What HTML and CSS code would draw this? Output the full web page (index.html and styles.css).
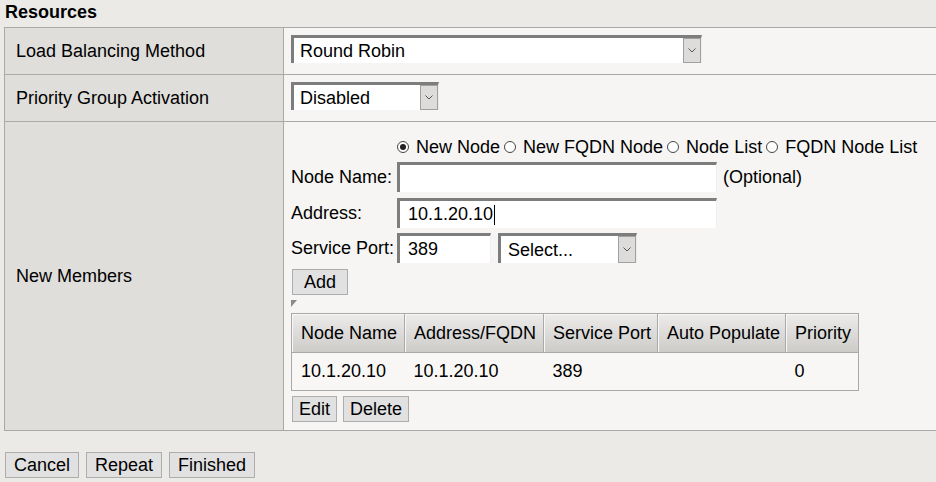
FILE: index.html
```html
<!DOCTYPE html>
<html lang="en">
  <head>
    <meta charset="UTF-8" />
    <title>Pool Resources</title>
    <link rel="stylesheet" href="styles.css">
  </head>
  <body>
    <div class="section-title">Resources</div>

    <table class="props">
      <colgroup>
        <col class="col-label">
        <col>
      </colgroup>
      <tr>
        <th>Load Balancing Method</th>
        <td>
          <div class="select select-lb">
            <span class="select-value">Round Robin</span>
            <span class="select-btn">
              <svg width="8" height="5" viewBox="0 0 8 5"><path d="M0.5 0.5 L4 4 L7.5 0.5" fill="none" stroke="#555" stroke-width="1"/></svg>
            </span>
          </div>
        </td>
      </tr>
      <tr>
        <th>Priority Group Activation</th>
        <td>
          <div class="select select-pga">
            <span class="select-value">Disabled</span>
            <span class="select-btn">
              <svg width="8" height="5" viewBox="0 0 8 5"><path d="M0.5 0.5 L4 4 L7.5 0.5" fill="none" stroke="#555" stroke-width="1"/></svg>
            </span>
          </div>
        </td>
      </tr>
      <tr>
        <th>New Members</th>
        <td class="members-cell">
          <div class="radio-row">
            <span class="radio checked"></span><span class="radio-text">New Node</span>
            <span class="radio"></span><span class="radio-text">New FQDN Node</span>
            <span class="radio"></span><span class="radio-text">Node List</span>
            <span class="radio"></span><span class="radio-text">FQDN Node List</span>
          </div>

          <div class="field-row">
            <span class="field-label">Node Name:</span>
            <div class="text-input input-wide"></div>
            <span class="hint">(Optional)</span>
          </div>
          <div class="field-row gap6">
            <span class="field-label">Address:</span>
            <div class="text-input input-wide">10.1.20.10<span class="caret"></span></div>
          </div>
          <div class="field-row gap5">
            <span class="field-label">Service Port:</span>
            <div class="text-input input-port">389</div>
            <div class="select select-port">
              <span class="select-value">Select...</span>
              <span class="select-btn">
                <svg width="8" height="5" viewBox="0 0 8 5"><path d="M0.5 0.5 L4 4 L7.5 0.5" fill="none" stroke="#555" stroke-width="1"/></svg>
              </span>
            </div>
          </div>

          <div class="btn-row add-row">
            <button class="btn btn-add">Add</button>
          </div>

          <div class="marker"></div>

          <table class="members">
            <tr>
              <th class="c1">Node Name</th>
              <th class="c2">Address/FQDN</th>
              <th class="c3">Service Port</th>
              <th class="c4">Auto Populate</th>
              <th class="c5">Priority</th>
            </tr>
            <tr>
              <td>10.1.20.10</td>
              <td>10.1.20.10</td>
              <td>389</td>
              <td></td>
              <td>0</td>
            </tr>
          </table>

          <div class="btn-row edit-row">
            <button class="btn btn-small">Edit</button>
            <button class="btn btn-small">Delete</button>
          </div>
        </td>
      </tr>
    </table>

    <div class="actions">
      <button class="btn">Cancel</button>
      <button class="btn">Repeat</button>
      <button class="btn">Finished</button>
    </div>
  </body>
</html>
```

FILE: styles.css
```css
* {
    margin: 0;
    padding: 0;
    box-sizing: border-box;
}
html, body {
    overflow: hidden;
}
body {
    background-color: #ebeae7;
    font-family: "Liberation Sans", Arial, sans-serif;
    font-size: 18px;
    color: #000;
}

.section-title {
    font-weight: bold;
    height: 27px;
    padding: 1px 5px 0;
    line-height: 22px;
}

/* main property table */
.props {
    border-collapse: collapse;
    table-layout: fixed;
    width: 932px;
    margin-left: 4px;
}
.col-label {
    width: 279px;
}
.props > tbody > tr > th,
.props > tbody > tr > td {
    border: 1px solid #a9a9a9;
}
.props > tbody > tr > td {
    border-right: none;
}
.props > tbody > tr > th {
    background-color: #dfdedb;
    font-weight: normal;
    text-align: left;
    padding-left: 11px;
    vertical-align: middle;
}
.props > tbody > tr > td {
    background-color: #f6f5f3;
    padding: 7px 0 11px 7px;
}
.props > tbody > tr > td.members-cell {
    padding: 13px 0 8px 7px;
}

/* fake select boxes */
.select {
    display: flex;
    height: 28px;
    background: #fff;
    border-style: solid;
    border-width: 3px 1px 0 3px;
    border-color: #7d7d7d #ececec #ececec #7d7d7d;
}
.select-lb { width: 411px; }
.select-pga { width: 148px; }
.select-port { width: 139px; height: 30px; margin-left: 7px; }
.select-value {
    flex: 1;
    padding-left: 6px;
    line-height: 27px;
}
.select-port .select-value {
    padding-left: 7px;
    line-height: 28px;
}
.select-btn {
    width: 18px;
    background-color: #dddcda;
    border: 1px solid #a0a0a0;
    display: flex;
    align-items: center;
    justify-content: center;
}

/* new member form */
.radio-row {
    display: flex;
    align-items: center;
    height: 24px;
    padding-left: 106px;
    margin-bottom: 3px;
}
.radio {
    width: 12px;
    height: 12px;
    border: 1px solid #444;
    border-radius: 50%;
    background: #fff;
    margin-right: 7px;
    position: relative;
}
.radio.checked::after {
    content: "";
    position: absolute;
    left: 2px;
    top: 2px;
    width: 6px;
    height: 6px;
    border-radius: 50%;
    background: #222;
}
.radio-text {
    margin-right: 4px;
}

.field-row {
    display: flex;
    align-items: center;
}
.gap6 { margin-top: 6px; }
.gap5 { margin-top: 5px; }
.field-label {
    width: 106px;
}
.text-input {
    height: 30px;
    background: #fff;
    border-style: solid;
    border-width: 3px 1px 0 3px;
    border-color: #7d7d7d #f0f0f0 #f0f0f0 #7d7d7d;
    padding-left: 8px;
    line-height: 27px;
    display: flex;
    align-items: center;
}
.input-wide { width: 320px; }
.input-port { width: 94px; }
.caret {
    display: inline-block;
    width: 1px;
    height: 20px;
    background: #000;
    margin-left: 1px;
}
.hint {
    margin-left: 6px;
}

.btn-row {
    display: flex;
    gap: 6px;
    padding-left: 1px;
}
.add-row { margin-top: 6px; }
.edit-row { margin-top: 5px; }

.btn {
    height: 26px;
    background-color: #e1e1e1;
    border: 1px solid #adadad;
    font-family: "Liberation Sans", Arial, sans-serif;
    font-size: 18px;
    color: #000;
    padding: 0 8px;
    line-height: 24px;
}
.btn-add {
    width: 56px;
}
.btn-small {
    padding: 0 6px;
}

.marker {
    width: 0;
    height: 0;
    margin-top: 5px;
    border-top: 7px solid #8a8a8a;
    border-right: 6px solid transparent;
}

/* members grid */
.members {
    border-collapse: collapse;
    table-layout: fixed;
    width: 567px;
    margin-top: 6px;
    border: 1px solid #a9a9a9;
}
.members th {
    height: 39px;
    background: linear-gradient(#ecebe9, #cccbc8);
    border: 1px solid #a9a9a9;
    box-shadow: inset 1px 1px 0 #f7f7f7;
    font-weight: normal;
    text-align: left;
    padding-left: 9px;
    white-space: nowrap;
}
.members td {
    height: 38px;
    padding-left: 9px;
    background-color: #f8f7f5;
}
.c1 { width: 113px; }
.c2 { width: 139px; }
.c3 { width: 114px; }
.c4 { width: 128px; }
.c5 { width: 73px; }

.actions {
    display: flex;
    gap: 7px;
    padding: 21px 0 0 5px;
}
```
